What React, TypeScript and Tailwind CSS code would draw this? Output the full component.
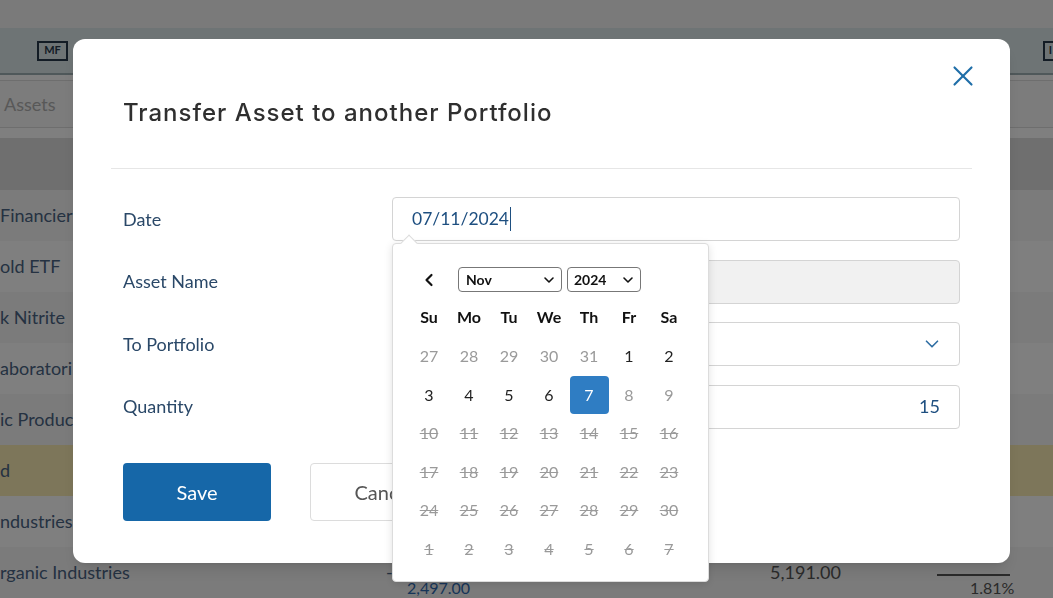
import { ChevronDown, ChevronLeft, X } from 'lucide-react';

const body = { fontFamily: 'Lato, "Noto Sans", sans-serif' };
const title = { fontFamily: 'Inter, "Noto Sans", sans-serif' };

type Day = { n: number; kind: 'out' | 'on' | 'off' | 'struck' | 'sel' };

// November 2024 grid as shown: past days live, future days struck out
const weeks: Day[][] = [
  [27, 28, 29, 30, 31].map((n) => ({ n, kind: 'out' as const })).concat([
    { n: 1, kind: 'on' },
    { n: 2, kind: 'on' },
  ]),
  [
    { n: 3, kind: 'on' },
    { n: 4, kind: 'on' },
    { n: 5, kind: 'on' },
    { n: 6, kind: 'on' },
    { n: 7, kind: 'sel' },
    { n: 8, kind: 'off' },
    { n: 9, kind: 'off' },
  ],
  [10, 11, 12, 13, 14, 15, 16].map((n) => ({ n, kind: 'struck' as const })),
  [17, 18, 19, 20, 21, 22, 23].map((n) => ({ n, kind: 'struck' as const })),
  [24, 25, 26, 27, 28, 29, 30].map((n) => ({ n, kind: 'struck' as const })),
  [1, 2, 3, 4, 5, 6, 7].map((n) => ({ n, kind: 'struck' as const })),
];

const dayNames = ['Su', 'Mo', 'Tu', 'We', 'Th', 'Fr', 'Sa'];

function DayCell({ day }: { day: Day }) {
  if (day.kind === 'sel') {
    return (
      <div className="flex h-[38.5px] w-10 items-center justify-center">
        <span className="flex h-[38px] w-[39px] items-center justify-center rounded bg-[#2f7dc3] text-white">
          {day.n}
        </span>
      </div>
    );
  }
  const cls =
    day.kind === 'on'
      ? 'text-[#222]'
      : day.kind === 'struck'
        ? 'text-[#9a9a9a] line-through'
        : 'text-[#9a9a9a]';
  return <div className={`flex h-[38.5px] w-10 items-center justify-center ${cls}`}>{day.n}</div>;
}

function Calendar() {
  return (
    <div
      className="absolute left-0 top-[46px] z-10 h-[339px] w-[317px] rounded border border-[#dcdcdc] bg-white px-4 pt-[23px] text-[16px] shadow-[0_2px_8px_rgba(0,0,0,0.12)]"
      style={body}
    >
      {/* little pointer up to the input */}
      <div className="absolute -top-[7px] left-[10px] h-3 w-3 rotate-45 border-l border-t border-[#dcdcdc] bg-white" />
      <div className="flex h-[25px] items-center">
        <div className="flex w-10 justify-center">
          <ChevronLeft size={20} strokeWidth={2.6} className="text-[#111]" />
        </div>
        <div className="ml-[9px] flex h-[25px] w-[104px] items-center justify-between rounded-sm border border-[#777] pl-[7px] pr-[4px] text-[14px] font-bold text-[#111]">
          Nov
          <ChevronDown size={16} strokeWidth={2.4} />
        </div>
        <div className="ml-[5px] flex h-[25px] w-[74px] items-center justify-between rounded-sm border border-[#777] pl-[6px] pr-[4px] text-[14px] font-bold text-[#111]">
          2024
          <ChevronDown size={16} strokeWidth={2.4} />
        </div>
      </div>
      <div className="mt-[13px] flex h-[24px]">
        {dayNames.map((d) => (
          <div key={d} className="flex w-10 items-center justify-center font-bold text-[#111]">
            {d}
          </div>
        ))}
      </div>
      <div className="mt-[8px]">
        {weeks.map((w, i) => (
          <div key={i} className="flex">
            {w.map((d, j) => (
              <DayCell key={j} day={d} />
            ))}
          </div>
        ))}
      </div>
    </div>
  );
}

function Background() {
  const rows = [
    { t: 'Financier', bg: 'bg-[#f6f6f6]' },
    { t: 'old ETF', bg: 'bg-white' },
    { t: 'k Nitrite', bg: 'bg-[#f6f6f6]' },
    { t: 'aboratori', bg: 'bg-white' },
    { t: 'ic Produc', bg: 'bg-[#f6f6f6]' },
    { t: 'd', bg: 'bg-[#fbecb4]' },
    { t: 'ndustries', bg: 'bg-white' },
  ];
  return (
    <div className="h-[598px] w-[1053px] overflow-hidden bg-white text-[18px] text-[#4a6484]" style={body}>
      <div className="h-[28px] bg-[#f4f4f4]" />
      <div className="flex h-[47px] items-center justify-between border-b-2 border-[#9fb0b4] bg-[#dde9ea]">
        <span className="ml-[37px] flex h-[20px] w-[31px] items-center justify-center border-2 border-[#27384a] text-[11px] font-bold text-[#27384a]">
          MF
        </span>
        <span className="flex h-[20px] w-[10px] items-center justify-end border-y-2 border-l-2 border-[#27384a] pr-px text-[11px] font-bold text-[#27384a]">
          I
        </span>
      </div>
      <div className="h-[5px] bg-white" />
      <div className="flex h-[48px] items-center border-y border-[#dcdcdc] bg-[#f8f8f8] pl-[4px] text-[#b0b0b0]">
        Assets
      </div>
      <div className="h-[10px]" />
      <div className="h-[52px] bg-[#dedede]" />
      {rows.map((r) => (
        <div key={r.t} className={`flex h-[51px] items-center ${r.bg}`}>
          {r.t}
        </div>
      ))}
      <div className="relative h-[51px] bg-[#f6f6f6]">
        <span className="absolute left-0 top-[12px]">rganic Industries</span>
        <span className="absolute left-[386px] top-[12px]">-</span>
        <span className="absolute left-[407px] top-[29px] text-[16px] text-[#2f6ab0]">2,497.00</span>
        <span className="absolute left-[770px] top-[12px] text-[#555]">5,191.00</span>
        <span className="absolute left-[937px] top-[27px] w-[73px] border-t-2 border-[#555]" />
        <span className="absolute left-[970px] top-[29px] text-[16px] text-[#555]">1.81%</span>
      </div>
    </div>
  );
}

export default function App() {
  return (
    <div className="relative h-[598px] w-[1053px] overflow-hidden">
      <Background />
      <div className="fixed inset-0 bg-black/50 pl-[73px] pt-[39px]">
        <div className="relative h-[524px] w-[937px] rounded-xl bg-white shadow-lg">
          <button className="absolute right-[30px] top-[20px] text-[#1f6ea8]">
            <X size={34} strokeWidth={1.5} />
          </button>
          <div className="flex h-[129px] items-center px-[50px] pt-[18px]">
            <h2 className="text-[24px] font-medium tracking-[1px] text-[#2f2f2f]" style={title}>
              Transfer Asset to another Portfolio
            </h2>
          </div>
          <div className="mx-[38px] border-t border-[#e6e6e6]" />
          <div className="px-[50px] pt-[28px]" style={body}>
            <div className="grid grid-cols-[269px_1fr] gap-y-[18.5px] text-[18px] text-[#2a4868]">
              <div className="flex h-[44px] items-center">Date</div>
              <div className="relative">
                <div className="flex h-[44px] items-center rounded border border-[#d4d4d4] px-[19px] text-[17.5px] text-[#1e4f80]">
                  07/11/2024
                  <span className="ml-px h-[24px] w-px bg-[#1e4f80]" />
                </div>
                <Calendar />
              </div>
              <div className="flex h-[44px] items-center">Asset Name</div>
              <div className="h-[44px] rounded border border-[#d4d4d4] bg-[#f1f1f1]" />
              <div className="flex h-[44px] items-center">To Portfolio</div>
              <div className="flex h-[44px] items-center justify-end rounded border border-[#d4d4d4] pr-[16px] text-[#2f6ea3]">
                <ChevronDown size={22} strokeWidth={1.8} />
              </div>
              <div className="flex h-[44px] items-center">Quantity</div>
              <div className="flex h-[44px] items-center justify-end rounded border border-[#d4d4d4] pr-[19px] text-[#1e4f80]">
                15
              </div>
            </div>
            <div className="mt-[34px] flex gap-[39px]">
              <button className="h-[58px] w-[148px] rounded bg-[#1667a8] text-[20px] text-white">Save</button>
              <button className="h-[58px] w-[148px] rounded border border-[#dcdcdc] bg-white text-[20px] text-[#555]">
                Cancel
              </button>
            </div>
          </div>
        </div>
      </div>
    </div>
  );
}
